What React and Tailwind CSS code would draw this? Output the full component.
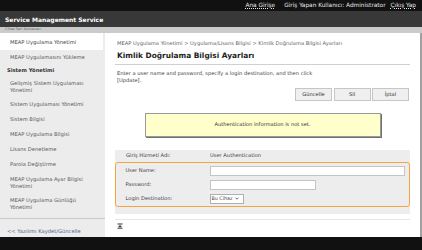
import React from 'react';

const sideItems = [
  { label: 'MEAP Uygulamasını Yükleme' },
  { label: 'Sistem Yönetimi', header: true },
  { label: ['Gelişmiş Sistem Uygulaması', 'Yönetimi'] },
  { label: 'Sistem Uygulaması Yönetimi' },
  { label: 'Sistem Bilgisi' },
  { label: 'MEAP Uygulama Bilgisi' },
  { label: 'Lisans Denetleme' },
  { label: 'Parola Değiştirme' },
  { label: ['MEAP Uygulama Ayar Bilgisi', 'Yönetimi'] },
  { label: ['MEAP Uygulama Günlüğü', 'Yönetimi'] },
];

const Sidebar = () => (
  <aside className="w-[105px] shrink-0 bg-[#ececec] flex flex-col text-[5.2px] leading-[7px] text-[#5a5a5a]">
    <div className="mr-[2px] bg-white pl-[10px] pt-[6px] pb-[4px] text-[#444]">MEAP Uygulama Yönetimi</div>
    {sideItems.map((item, i) => {
      if (item.header) {
        return (
          <div key={i} className="h-[11px] flex items-center pl-[7px] font-bold text-[#333]">{item.label}</div>
        );
      }
      if (Array.isArray(item.label)) {
        return (
          <div key={i} className="pl-[10px] py-[3.5px]">
            {item.label[0]}
            <br />
            {item.label[1]}
          </div>
        );
      }
      return <div key={i} className="pl-[10px] py-[4px]">{item.label}</div>;
    })}
    <div className="mt-[4px] border-t border-[#c9c9c9] pl-[7px] pt-[9px] text-[#52698f]">&lt;&lt; Yazılımı Kaydet/Güncelle</div>
  </aside>
);

const FormRow = ({ label, children }) => (
  <div className="h-[14px] flex items-center">
    <div className="w-[93.5px] shrink-0 pl-[9.5px]">{label}</div>
    {children}
  </div>
);

const Main = () => (
  <main className="flex-1 min-w-0 border-r-2 border-[#a0a0a0] pl-[10px] pr-[10px] text-[#333]">
    <div className="pt-[7px] pl-[2px] text-[5.15px] leading-[6px] text-[#666] whitespace-nowrap">
      MEAP Uygulama Yönetimi &gt; Uygulama/Lisans Bilgisi &gt; Kimlik Doğrulama Bilgisi Ayarları
    </div>
    <h1 className="mt-[5px] pl-[2px] pb-[4px] border-b border-[#d0d0d0] text-[7.4px] leading-[9px] font-bold text-[#222]">
      Kimlik Doğrulama Bilgisi Ayarları
    </h1>
    <p className="mt-[4.5px] pl-[2px] text-[5.15px] leading-[7px] text-[#444]">
      Enter a user name and password, specify a login destination, and then click
      <br />
      [Update].
    </p>
    <div className="mt-[4.5px] flex justify-end gap-[1.5px] pr-[1px]">
      {['Güncelle', 'Sil', 'İptal'].map(b => (
        <button
          key={b}
          className="w-[37px] h-[13px] bg-[#efefef] border border-[#c6c6c6] text-[5.15px] text-[#333] flex items-center justify-center"
        >
          {b}
        </button>
      ))}
    </div>
    <div className="mt-[12px] mx-auto w-[236px] h-[24px] bg-[#ffffcc] border border-[#9a9a9a] shadow-[1px_1px_0_#6f6f6f] flex items-center justify-center text-[5.15px] text-[#333]">
      Authentication information is not set.
    </div>
    <div className="mt-[13px] bg-[#ededed] pb-[7px] text-[5.15px] text-[#444]">
      <div className="h-[12px] flex items-center">
        <div className="w-[95px] shrink-0 pl-[11px]">Giriş Hizmeti Adı:</div>
        <div>User Authentication</div>
      </div>
      <div className="border-[1.5px] border-[#f5a53f] rounded-[3px] pt-[0.5px]">
        <FormRow label="User Name:">
          <div className="w-[195px] h-[10px] bg-white border border-[#c4c4c4]" />
        </FormRow>
        <FormRow label="Password:">
          <div className="w-[106px] h-[10px] bg-white border border-[#c4c4c4]" />
        </FormRow>
        <FormRow label="Login Destination:">
          <div className="w-[34px] h-[10px] bg-white border border-[#b0b0b0] flex items-center gap-[2px] pl-[1px] text-[4.8px]">
            <span>Bu Cihaz</span>
            <svg width="4" height="3" viewBox="0 0 4 3">
              <path d="M0.5 0.7 L2 2.2 L3.5 0.7" fill="none" stroke="#444" strokeWidth="0.8" />
            </svg>
          </div>
        </FormRow>
      </div>
    </div>
    <div className="mt-[5px] border-t border-[#e6e6e6] pt-[3px] pl-[2px]">
      <svg width="6" height="6" viewBox="0 0 6 6">
        <rect x="0.5" y="0.5" width="5" height="1" fill="#333" />
        <path d="M3 2 L5.2 4.3 L0.8 4.3 Z" fill="#333" />
        <rect x="0.5" y="4.8" width="5" height="0.9" fill="#333" />
      </svg>
    </div>
  </main>
);

export default function App() {
  return (
    <div className="w-[422px] h-[250px] flex flex-col overflow-hidden bg-white font-['DejaVu_Sans',Verdana,sans-serif]">
      <div className="h-[11px] shrink-0 bg-[#111] flex items-center justify-end pr-[6px] text-[5.8px] leading-none text-[#e6e6e6]">
        <a className="underline decoration-dotted mr-[9px]">Ana Girişe</a>
        <span className="mr-[5px]">Giriş Yapan Kullanıcı: Administrator</span>
        <a className="underline decoration-dotted">Çıkış Yap</a>
      </div>
      <div className="h-[16px] shrink-0 bg-[#383838] flex items-center px-[5px] text-[6px] font-bold text-white">
        Service Management Service
      </div>
      <div className="h-[6px] shrink-0 bg-[#cbcbcb] flex items-center px-[5px] text-[3.5px] text-[#666]">
        Cihaz Seri Numarası:
      </div>
      <div className="flex-1 min-h-0 flex">
        <Sidebar />
        <Main />
      </div>
      <div className="h-[13px] shrink-0 bg-[#111]" />
    </div>
  );
}
